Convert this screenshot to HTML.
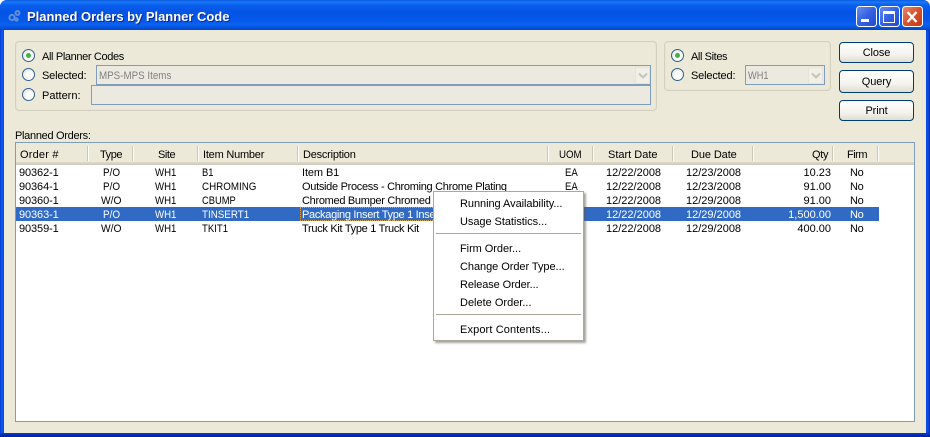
<!DOCTYPE html>
<html><head><meta charset="utf-8"><style>
html,body{margin:0;padding:0;width:930px;height:437px;overflow:hidden;background:#fff}
*{box-sizing:border-box}
#w{position:absolute;left:0;top:0;width:930px;height:437px;overflow:hidden;border-radius:7px 7px 0 0;background:#0831d9}
#tb{position:absolute;left:0;top:0;width:930px;height:30px;background:linear-gradient(to bottom,#0a5ae0 0,#1a78f5 2px,#0a60ee 5px,#0454e4 12px,#0558ea 20px,#0a62f0 25px,#0450d8 28px,#0342c8 30px)}
#lb{position:absolute;left:0;top:30px;width:4px;height:407px;background:linear-gradient(to right,#0a3ad0,#0a5cf0 50%,#0847e0)}
#rb{position:absolute;left:926px;top:30px;width:4px;height:407px;background:linear-gradient(to right,#0847e0,#0a50e8 50%,#0026a8)}
#bb{position:absolute;left:0;top:433px;width:930px;height:4px;background:linear-gradient(to bottom,#0a3ad8,#0228b0 60%,#001f90)}
#c{position:absolute;left:4px;top:30px;width:922px;height:403px;background:#ece9d8}
.t{position:absolute;margin-top:1px;font:11px/14px "Liberation Sans",sans-serif;color:#000;white-space:pre;letter-spacing:0;transform-origin:0 50%}
.ti{position:absolute;left:27px;top:9px;font:bold 13px/16px "Liberation Sans",sans-serif;color:#fff;letter-spacing:-.02px;text-shadow:1px 1px 0 #0a2a90;white-space:pre}
.d{letter-spacing:-.3px}
.wh{transform:scaleX(.875)}
.po{transform:scaleX(.9)}
.wo{transform:scaleX(.93)}
.no{letter-spacing:-.3px}
.ord{letter-spacing:-.1px}
.g{position:absolute;border:1px solid #d3d0bf;border-radius:4px;background:#ece9d8;box-shadow:inset 0 0 0 1px #e8e5d4}
.r{position:absolute;width:13px;height:13px;border-radius:50%;border:1px solid #2f5f8e;background:radial-gradient(circle at 65% 65%,#fff 30%,#e6e6dc 80%)}
.r i{position:absolute;left:3px;top:3px;width:5px;height:5px;border-radius:50%;background:#3fb53f}
.f{position:absolute;border:1px solid #7f9db9;background:#ebe9e0}
.ar{position:absolute;width:15px;height:17px;background:#f1efe6;border:1px solid #e6e4da}
.b{position:absolute;left:839px;width:75px;border:1px solid #003c74;border-radius:4px;background:linear-gradient(to bottom,#fff,#f4f3ee 60%,#e0ddd0);text-align:center;font:11px/20px "Liberation Sans",sans-serif;color:#000;letter-spacing:-.1px}
.s{position:absolute;top:146px;height:15px;background:#cbc7b8;border-right:1px solid #fff;width:2px}
.sel{color:#fff}
.m{position:absolute;left:433px;top:191px;width:151px;height:150px;background:#fff;border:1px solid #aca899;box-shadow:2px 2px 2px rgba(90,90,80,.55)}
.hr{position:absolute;left:436px;width:145px;height:1px;background:#aca899}
</style></head><body>
<div id="w">
<div id="tb"></div><div id="lb"></div><div id="rb"></div><div id="bb"></div><div id="c"></div>
<svg style="position:absolute;left:6px;top:8px" width="16" height="16" viewBox="0 0 16 16"><g fill="none" stroke="#5f8ed4" stroke-width="2"><circle cx="6" cy="9.500" r="2.600"/><circle cx="11.500" cy="5" r="2"/><circle cx="10.500" cy="11.500" r="1.200"/></g></svg>
<div class="ti">Planned Orders by Planner Code</div>

<svg style="position:absolute;left:856px;top:6px" width="70" height="21" viewBox="0 0 70 21">
<defs>
<linearGradient id="bl" x1="0" y1="0" x2="1" y2="1"><stop offset="0" stop-color="#6a90f0"/><stop offset=".5" stop-color="#3560e4"/><stop offset="1" stop-color="#2448cc"/></linearGradient>
<linearGradient id="rd" x1="0" y1="0" x2="1" y2="1"><stop offset="0" stop-color="#ea8a6c"/><stop offset=".5" stop-color="#d8502c"/><stop offset="1" stop-color="#c03814"/></linearGradient>
</defs>
<rect x=".5" y=".5" width="20" height="20" rx="3" fill="url(#bl)" stroke="#fff"/>
<rect x="5" y="13" width="8" height="3" fill="#fff"/>
<rect x="23.500" y=".5" width="20" height="20" rx="3" fill="url(#bl)" stroke="#fff"/>
<rect x="27.500" y="5.500" width="11" height="11" fill="none" stroke="#fff"/><rect x="27" y="5" width="12" height="3" fill="#fff"/>
<rect x="46.500" y=".5" width="20" height="20" rx="3" fill="url(#rd)" stroke="#fff"/>
<path d="M51.500 6l9 10M60.500 6l-9 10" stroke="#fff" stroke-width="2.400" fill="none"/>
</svg>

<div class="g" style="left:15px;top:41px;width:642px;height:70px"></div>
<div class="g" style="left:664px;top:41px;width:167px;height:50px"></div>

<div class="r" style="left:22px;top:49px"><i></i></div>
<div class="r" style="left:22px;top:68px"></div>
<div class="r" style="left:22px;top:88px"></div>
<div class="t" style="left:42px;top:49px;letter-spacing:-.36px">All Planner Codes</div>
<div class="t" style="left:42px;top:68px;letter-spacing:-.17px">Selected:</div>
<div class="t" style="left:42px;top:88px">Pattern:</div>
<div class="f" style="left:96px;top:65px;width:555px;height:20px"></div>
<div class="ar" style="left:635px;top:67px"></div>
<svg style="position:absolute;left:638px;top:72px" width="10" height="8"><path d="M1 1.500l4 4 4-4" fill="none" stroke="#c4c4ba" stroke-width="2"/></svg>
<div class="t" style="left:99px;top:68px;color:#808080;transform:scaleX(.89)">MPS-MPS Items</div>
<div class="f" style="left:91px;top:85px;width:560px;height:20px"></div>

<div class="r" style="left:671px;top:49px"><i></i></div>
<div class="r" style="left:671px;top:68px"></div>
<div class="t" style="left:691px;top:49px;letter-spacing:-.4px">All Sites</div>
<div class="t" style="left:691px;top:68px;letter-spacing:-.17px">Selected:</div>
<div class="f" style="left:745px;top:65px;width:80px;height:20px"></div>
<div class="ar" style="left:808px;top:67px"></div>
<svg style="position:absolute;left:811px;top:72px" width="10" height="8"><path d="M1 1.500l4 4 4-4" fill="none" stroke="#c4c4ba" stroke-width="2"/></svg>
<div class="t" style="left:748px;top:68px;color:#808080;transform:scaleX(.84)">WH1</div>

<div class="b" style="top:42px;height:21px">Close</div>
<div class="b" style="top:70px;height:23px;line-height:22px">Query</div>
<div class="b" style="top:100px;height:21px">Print</div>

<div class="t" style="left:15px;top:128px;letter-spacing:-.3px">Planned Orders:</div>

<div style="position:absolute;left:15px;top:142px;width:900px;height:280px;border:1px solid #7f9db9;background:#fff"></div>
<div style="position:absolute;left:16px;top:143px;width:898px;height:19px;background:#ece9d8"></div>
<div style="position:absolute;left:16px;top:162px;width:898px;height:3px;background:linear-gradient(to bottom,#dfdccb,#cbc7b8)"></div>
<div class="s" style="left:87px"></div><div class="s" style="left:132px"></div><div class="s" style="left:197px"></div><div class="s" style="left:297px"></div><div class="s" style="left:547px"></div><div class="s" style="left:592px"></div><div class="s" style="left:672px"></div><div class="s" style="left:752px"></div><div class="s" style="left:832px"></div><div class="s" style="left:877px"></div>

<div class="t" style="left:20px;top:147px;letter-spacing:.2px">Order #</div>
<div class="t" style="left:100px;top:147px;letter-spacing:-.45px">Type</div>
<div class="t" style="left:158px;top:147px;letter-spacing:-.45px">Site</div>
<div class="t" style="left:203px;top:147px;letter-spacing:-.22px">Item Number</div>
<div class="t" style="left:303px;top:147px;letter-spacing:-.22px">Description</div>
<div class="t" style="left:559px;top:147px;transform:scaleX(.88)">UOM</div>
<div class="t" style="left:608px;top:147px">Start Date</div>
<div class="t" style="left:691px;top:147px;letter-spacing:-.1px">Due Date</div>
<div class="t" style="left:812px;top:147px;letter-spacing:-.3px">Qty</div>
<div class="t" style="left:847px;top:147px;letter-spacing:-.5px">Firm</div>

<div style="position:absolute;left:16px;top:207px;width:863px;height:14px;background:#316ac5"></div>
<div style="position:absolute;left:300px;top:207px;width:247px;height:14px;border:1px dotted #d8a050"></div>

<div class="t ord" style="left:19px;top:165px">90362-1</div><div class="t po" style="left:103px;top:165px">P/O</div><div class="t wh" style="left:155px;top:165px">WH1</div><div class="t" style="left:202px;top:165px;transform:scaleX(.85)">B1</div><div class="t" style="left:302px;top:165px;letter-spacing:-.1px">Item B1</div><div class="t" style="left:565px;top:165px;transform:scaleX(.87)">EA</div><div class="t" style="left:606px;top:165px">12/22/2008</div><div class="t" style="left:686px;top:165px">12/23/2008</div><div class="t" style="left:780px;top:165px;width:51px;text-align:right">10.23</div><div class="t no" style="left:850px;top:165px">No</div>

<div class="t ord" style="left:19px;top:179px">90364-1</div><div class="t po" style="left:103px;top:179px">P/O</div><div class="t wh" style="left:155px;top:179px">WH1</div><div class="t" style="left:202px;top:179px;transform:scaleX(.89)">CHROMING</div><div class="t d" style="left:302px;top:179px">Outside Process - Chroming Chrome Plating</div><div class="t" style="left:565px;top:179px;transform:scaleX(.87)">EA</div><div class="t" style="left:606px;top:179px">12/22/2008</div><div class="t" style="left:686px;top:179px">12/23/2008</div><div class="t" style="left:780px;top:179px;width:51px;text-align:right">91.00</div><div class="t no" style="left:850px;top:179px">No</div>

<div class="t ord" style="left:19px;top:193px">90360-1</div><div class="t wo" style="left:101px;top:193px">W/O</div><div class="t wh" style="left:155px;top:193px">WH1</div><div class="t" style="left:202px;top:193px;transform:scaleX(.85)">CBUMP</div><div class="t d" style="left:302px;top:193px">Chromed Bumper Chromed</div><div class="t" style="left:606px;top:193px">12/22/2008</div><div class="t" style="left:686px;top:193px">12/29/2008</div><div class="t" style="left:780px;top:193px;width:51px;text-align:right">91.00</div><div class="t no" style="left:850px;top:193px">No</div>

<div class="t sel ord" style="left:19px;top:207px">90363-1</div><div class="t sel po" style="left:103px;top:207px">P/O</div><div class="t sel wh" style="left:155px;top:207px">WH1</div><div class="t sel" style="left:202px;top:207px;transform:scaleX(.89)">TINSERT1</div><div class="t sel d" style="left:302px;top:207px">Packaging Insert Type 1 Insert</div><div class="t sel" style="left:606px;top:207px">12/22/2008</div><div class="t sel" style="left:686px;top:207px">12/29/2008</div><div class="t sel" style="left:780px;top:207px;width:51px;text-align:right">1,500.00</div><div class="t sel no" style="left:850px;top:207px">No</div>

<div class="t ord" style="left:19px;top:221px">90359-1</div><div class="t wo" style="left:101px;top:221px">W/O</div><div class="t wh" style="left:155px;top:221px">WH1</div><div class="t" style="left:202px;top:221px;transform:scaleX(.87)">TKIT1</div><div class="t d" style="left:302px;top:221px">Truck Kit Type 1 Truck Kit</div><div class="t" style="left:606px;top:221px">12/22/2008</div><div class="t" style="left:686px;top:221px">12/29/2008</div><div class="t" style="left:780px;top:221px;width:51px;text-align:right">400.00</div><div class="t no" style="left:850px;top:221px">No</div>

<div class="m"></div>
<div class="t" style="left:460px;top:196px;letter-spacing:-.05px">Running Availability...</div>
<div class="t" style="left:460px;top:214px;letter-spacing:-.05px">Usage Statistics...</div>
<div class="hr" style="top:233px"></div>
<div class="t" style="left:460px;top:241px;letter-spacing:-.05px">Firm Order...</div>
<div class="t" style="left:460px;top:259px;letter-spacing:-.05px">Change Order Type...</div>
<div class="t" style="left:460px;top:277px;letter-spacing:-.1px">Release Order...</div>
<div class="t" style="left:460px;top:295px">Delete Order...</div>
<div class="hr" style="top:314px"></div>
<div class="t" style="left:460px;top:322px;letter-spacing:.12px">Export Contents...</div>
</div>
</body></html>
